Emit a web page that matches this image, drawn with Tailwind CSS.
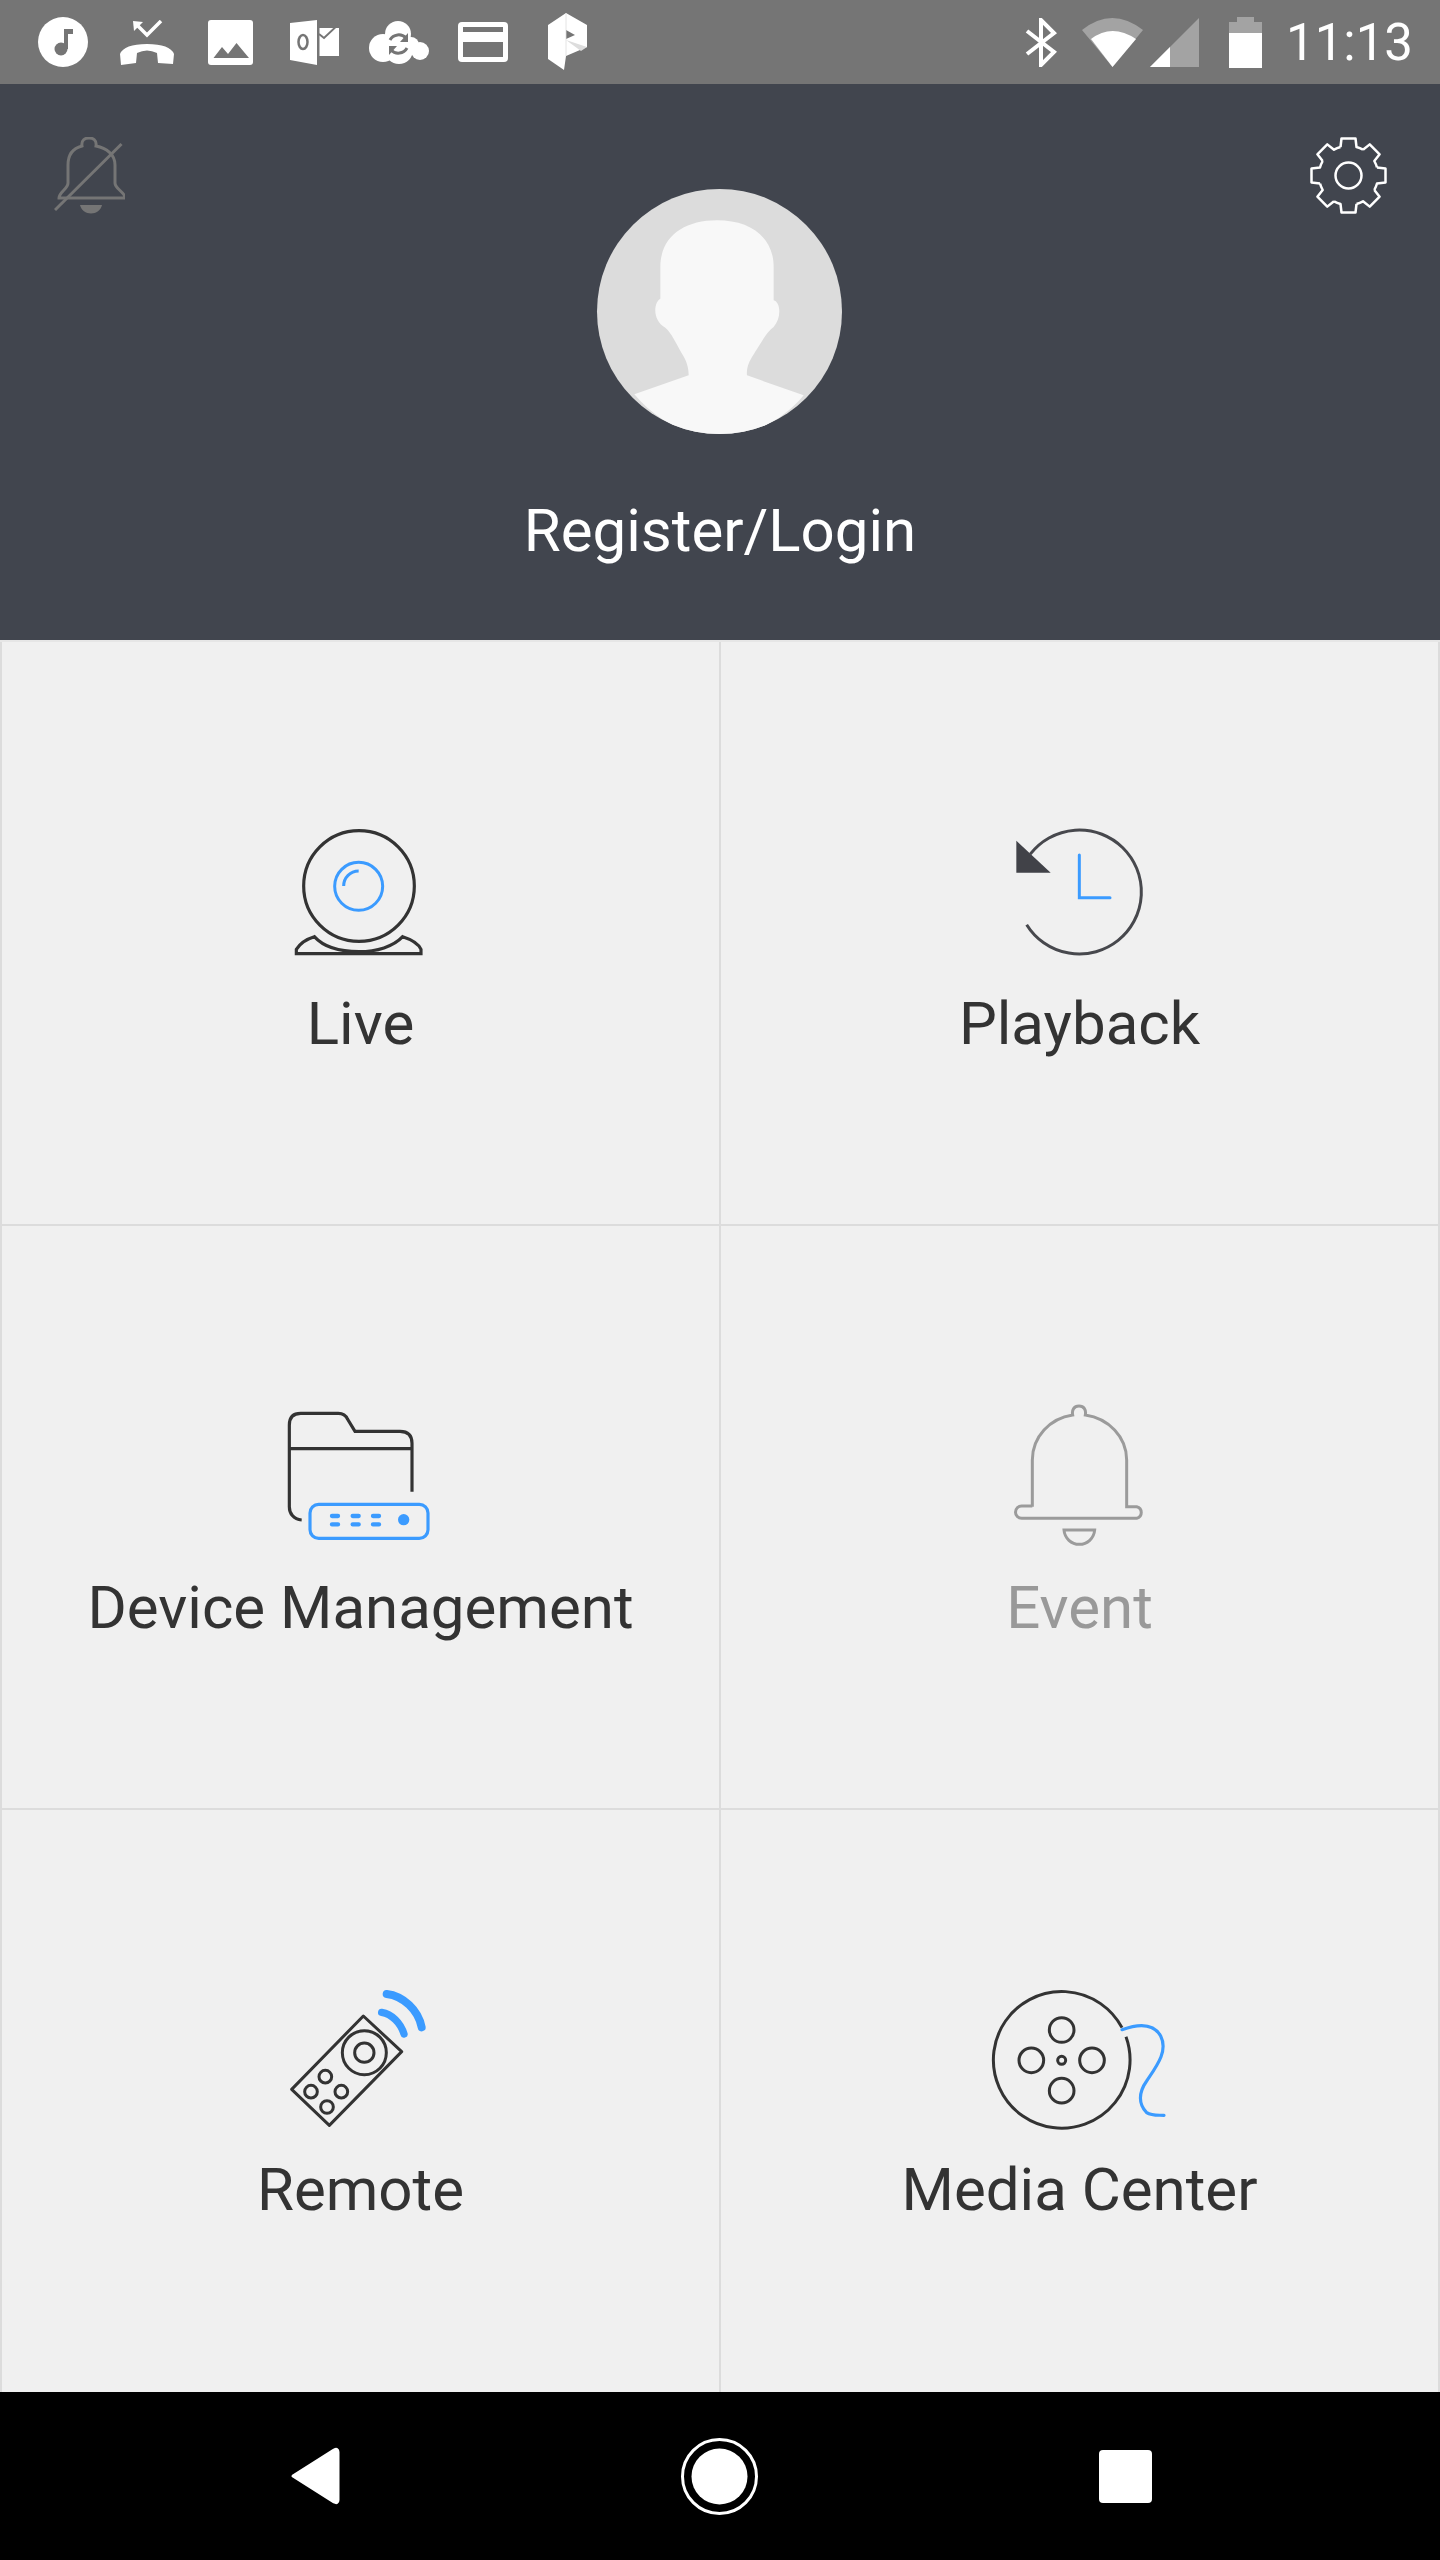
<!DOCTYPE html>
<html lang="en">
<head>
  <meta charset="UTF-8" />
  <meta name="viewport" content="width=device-width, initial-scale=1.0" />
  <title>Home</title>
  <script src="https://cdn.jsdelivr.net/npm/@tailwindcss/browser@4"></script>
</head>
<body class="bg-black font-[Roboto,sans-serif]">
<div class="w-[1440px] h-[2560px] flex flex-col overflow-hidden">

  <!-- Status bar -->
  <div class="h-[84px] shrink-0 bg-[#757575] flex items-center pl-[38px] pr-[28px]">
    <svg class="w-[50px] h-[50px]" viewBox="0 0 50 50"><circle cx="25" cy="25" r="25" fill="#fff"/><path d="M26 12H35V17H30V32H26Z" fill="#757575"/><circle cx="23" cy="32" r="6.500" fill="#757575"/></svg>
    <svg class="ml-[32px] w-[54px] h-[45px]" viewBox="0 0 54 45"><path d="M1 45L0 34Q4 24 27 24Q50 24 54 34L53 44L38 43L37 33Q27 28 17 33L16 43Z" fill="#fff"/><path d="M41 1L27 15L17 5" fill="none" stroke="#fff" stroke-width="3.500"/><path d="M13 1L23 2L14 11Z" fill="#fff"/></svg>
    <svg class="ml-[34px] w-[45px] h-[45px]" viewBox="0 0 45 45"><rect width="45" height="45" rx="3" fill="#fff"/><path d="M5.500 38L14 27L20 34L28.500 23L41 38Z" fill="#757575"/></svg>
    <svg class="ml-[37px] w-[50px] h-[45px]" viewBox="0 0 50 45"><path d="M0 3L27 0V45L0 40Z" fill="#fff"/><ellipse cx="13" cy="22" rx="4.500" ry="7" fill="none" stroke="#757575" stroke-width="2.500"/><rect x="29.500" y="8" width="19.500" height="28" fill="#fff"/><path d="M29 14L34 18L50 3" fill="none" stroke="#757575" stroke-width="2"/></svg>
    <svg class="ml-[29px] w-[60px] h-[43px]" viewBox="0 0 60 43"><g fill="#fff"><circle cx="29" cy="13" r="13"/><circle cx="14" cy="27" r="14"/><circle cx="51" cy="30" r="9"/><circle cx="30" cy="29" r="14"/><circle cx="42" cy="24" r="8"/></g><path d="M37 17A10 10 0 0 0 21 19M22 29A10 10 0 0 0 38 27" fill="none" stroke="#757575" stroke-width="3"/><path d="M39 12V21H31ZM20 34V25H28Z" fill="#757575"/></svg>
    <svg class="ml-[29px] w-[50px] h-[40px]" viewBox="0 0 50 40"><rect width="50" height="40" rx="4" fill="#fff"/><rect x="5" y="5" width="40" height="5" fill="#757575"/><rect x="5" y="20" width="40" height="15" fill="#757575"/></svg>
    <svg class="ml-[40px] w-[40px] h-[58px]" viewBox="0 0 40 58"><path d="M18 0L39 12V34L18 43L16 57L0 46V12Z" fill="#fff"/><path d="M18 17L27 22L18 26Z" fill="#757575"/><path d="M18 0L18 43" stroke="#ddd" stroke-width="0.800"/><path d="M18 27L39 34L33 38Z" fill="#ddd"/></svg>

    <svg class="ml-auto w-[32px] h-[49px]" viewBox="0 0 32 49"><path d="M2 13L29 34L16 47V2L29 15L2 36" fill="none" stroke="#fff" stroke-width="4"/></svg>
    <svg class="ml-[25px] w-[61px] h-[49px]" viewBox="0 0 61 49"><path d="M0 12Q30 -12 61 12L30.500 49Z" fill="#a3a3a3"/><path d="M9 21Q30 5 54 21L30.500 49Z" fill="#fff"/></svg>
    <svg class="ml-[7px] w-[49px] h-[49px]" viewBox="0 0 49 49"><path d="M0 49L49 0V49Z" fill="#a3a3a3"/><path d="M0 49L20 29V49Z" fill="#fff"/></svg>
    <svg class="ml-[30px] w-[33px] h-[51px]" viewBox="0 0 33 51"><path d="M8 0H25V5H33V16H0V5H8Z" fill="#a3a3a3"/><rect y="16" width="33" height="35" fill="#fff"/></svg>
    <span class="ml-[24px] w-[126px] whitespace-nowrap text-[51px] leading-none text-white">11:13</span>
  </div>

  <!-- Profile header -->
  <div class="relative h-[556px] shrink-0 bg-[#41454e] flex flex-col items-center pt-[105px]">
    <svg class="absolute left-[54px] top-[53px] w-[71px] h-[77px]" viewBox="0 0 71 77">
      <path d="M5 61C5 55 14 52 14 46V28C14 17 20 11 28 9C27 3 31 1 35 1C39 1 43 3 42 9C52 11 61 17 61 28V46C61 52 71 55 71 61Z" fill="none" stroke="#757575" stroke-width="3"/>
      <path d="M1 73L67.500 7" stroke="#757575" stroke-width="3"/>
      <path d="M26 68H48C47 73 42 76.500 37 76.500C32 76.500 27 73 26 68Z" fill="#757575"/>
    </svg>
    <svg class="absolute left-[1310px] top-[53px] w-[77px] h-[77px]" viewBox="-38.500 -38.500 77 77">
      <g fill="none" stroke="#fff" stroke-width="2.500" stroke-linejoin="round">
        <path d="M-8 -28.500L-7 -37H7L8 -28.500A29.600 29.600 0 0 1 14.500 -25.800"/>
        <path transform="rotate(45)" d="M-8 -28.500L-7 -37H7L8 -28.500A29.600 29.600 0 0 1 14.500 -25.800"/>
        <path transform="rotate(90)" d="M-8 -28.500L-7 -37H7L8 -28.500A29.600 29.600 0 0 1 14.500 -25.800"/>
        <path transform="rotate(135)" d="M-8 -28.500L-7 -37H7L8 -28.500A29.600 29.600 0 0 1 14.500 -25.800"/>
        <path transform="rotate(180)" d="M-8 -28.500L-7 -37H7L8 -28.500A29.600 29.600 0 0 1 14.500 -25.800"/>
        <path transform="rotate(225)" d="M-8 -28.500L-7 -37H7L8 -28.500A29.600 29.600 0 0 1 14.500 -25.800"/>
        <path transform="rotate(270)" d="M-8 -28.500L-7 -37H7L8 -28.500A29.600 29.600 0 0 1 14.500 -25.800"/>
        <path transform="rotate(315)" d="M-8 -28.500L-7 -37H7L8 -28.500A29.600 29.600 0 0 1 14.500 -25.800"/>
        <circle r="13"/>
      </g>
    </svg>
    <div class="w-[245px] h-[245px] mr-[2px] rounded-full overflow-hidden bg-[#dcdcdc]">
      <svg class="w-[245px] h-[245px]" viewBox="110 56 735 735"><path d="M300 385V290C300 200 370 150 470 150C570 150 640 200 640 290V390C660 395 665 440 640 470C620 485 610 505 575 560C562 580 558 600 560 615L730 675C660 760 560 800 477 800C390 800 290 755 222 672L385 615C385 590 378 570 365 550C345 515 335 490 315 472C275 450 280 395 300 385Z" fill="#f8f8f8"/></svg>
    </div>
    <div class="mt-[55px] text-[60px] leading-[84px] text-white">Register/Login</div>
  </div>

  <!-- Menu grid -->
  <div class="h-[1752px] shrink-0 grid grid-cols-[721px_719px] grid-rows-[584px_584px_582px] bg-[#f0f0f0] text-[#333] border-t-2 border-[#e6e6e6]">

    <div class="flex flex-col items-center pt-[160px] border-l-2 border-r-2 border-b-2 border-[#dcdcdc]">
      <svg class="w-[220px] h-[180px]" viewBox="-27 6 660 540" fill="none">
        <circle cx="297" cy="258" r="166" stroke="#333" stroke-width="9.500"/>
        <circle cx="296" cy="259" r="72" stroke="#3b9bff" stroke-width="9"/>
        <path d="M251 258C251 233 271 213 296 213" stroke="#3b9bff" stroke-width="9"/>
        <path d="M109 461V448C120 430 140 417 163 410C190 440 240 455 297 455C350 455 400 440 428 410C450 417 475 430 483 448V461Z" stroke="#333" stroke-width="9.500"/>
      </svg>
      <div class="text-[60px] leading-[84px]">Live</div>
    </div>

    <div class="flex flex-col items-center pt-[160px] border-r-2 border-b-2 border-[#dcdcdc]">
      <svg class="w-[220px] h-[180px]" viewBox="-60 6 660 540" fill="none">
        <path d="M110 374A186 186 0 1 0 120.600 162.600" stroke="#47484d" stroke-width="9"/>
        <path d="M79 122V218H182Z" fill="#414248"/>
        <path d="M268 165V293H360" stroke="#3b9bff" stroke-width="9" stroke-linecap="round"/>
      </svg>
      <div class="text-[60px] leading-[84px]">Playback</div>
    </div>

    <div class="flex flex-col items-center pt-[160px] border-l-2 border-r-2 border-b-2 border-[#dcdcdc]">
      <svg class="w-[220px] h-[180px]" viewBox="-27 -12 660 540" fill="none">
        <path d="M125 390C100 388 88 370 88 350V105Q88 70 122 70H235Q255 70 263 88L285 124H420Q456 124 456 160V305M88 176H456" stroke="#333" stroke-width="9.500"/>
        <rect x="150" y="343" width="354" height="102" rx="26" stroke="#3b9bff" stroke-width="9.500"/>
        <path d="M216 378H234M278 378H296M339 378H357M216 403H234M278 403H296M339 403H357" stroke="#3b9bff" stroke-width="13" stroke-linecap="round"/>
        <circle cx="431" cy="389" r="17" fill="#3b9bff"/>
      </svg>
      <div class="text-[60px] leading-[84px]">Device Management</div>
    </div>

    <div class="flex flex-col items-center pt-[160px] border-r-2 border-b-2 border-[#dcdcdc]">
      <svg class="w-[220px] h-[180px]" viewBox="-60 -12 660 540" fill="none" stroke="#9b9b9b" stroke-width="9">
        <path d="M127 350V210C127 140 180 85 248 75C245 60 252 48 267 48C282 48 289 60 286 75C355 85 410 140 410 210V350H440A18 18 0 0 1 440 385H95A18 18 0 0 1 95 348H127Z"/>
        <path d="M222 420H314C312 445 292 463 268 463C244 463 224 445 222 420Z"/>
      </svg>
      <div class="text-[60px] leading-[84px] text-[#999]">Event</div>
    </div>

    <div class="flex flex-col items-center pt-[160px] border-l-2 border-r-2 border-[#dcdcdc]">
      <svg class="w-[220px] h-[180px]" viewBox="-57 0 660 540" fill="none" stroke="#333" stroke-width="9">
        <path d="M280 138L395 245L178 466L65 358Z" stroke-linejoin="round"/>
        <circle cx="283" cy="248" r="66"/>
        <circle cx="283" cy="248" r="29"/>
        <circle cx="166" cy="320" r="19"/>
        <circle cx="123" cy="365" r="19"/>
        <circle cx="214" cy="365" r="19"/>
        <circle cx="171" cy="411" r="19"/>
        <path d="M350 72C400 78 445 120 455 172" stroke="#3b9bff" stroke-width="24" stroke-linecap="round"/>
        <path d="M335 127C365 132 392 158 402 192" stroke="#3b9bff" stroke-width="22" stroke-linecap="round"/>
      </svg>
      <div class="-mt-[2px] text-[60px] leading-[84px]">Remote</div>
    </div>

    <div class="flex flex-col items-center pt-[160px] border-r-2 border-[#dcdcdc]">
      <svg class="w-[220px] h-[180px]" viewBox="0 -3 660 540" fill="none" stroke="#333" stroke-width="9">
        <path d="M456 170A205 205 0 1 0 468 197"/>
        <circle cx="275" cy="177" r="37"/>
        <circle cx="184" cy="268" r="37"/>
        <circle cx="366" cy="268" r="37"/>
        <circle cx="275" cy="359" r="37"/>
        <circle cx="275" cy="268" r="12"/>
        <path d="M456 176C500 160 550 155 572 195C595 240 560 285 530 330C505 365 505 400 530 425C545 435 565 432 582 433" stroke="#3b9bff" stroke-width="9.500" stroke-linecap="round"/>
      </svg>
      <div class="-mt-[2px] text-[60px] leading-[84px]">Media Center</div>
    </div>
  </div>

  <!-- Navigation bar -->
  <div class="flex-1 bg-black flex items-center pl-[290px]">
    <svg class="w-[50px] h-[58px]" viewBox="0 0 50 58"><path d="M3 29L44 3Q48 1 48 5V53Q48 57 44 55Z" fill="#fff" stroke="#fff" stroke-width="3" stroke-linejoin="round"/></svg>
    <svg class="ml-[341px] w-[77px] h-[77px]" viewBox="0 0 77 77"><circle cx="38.500" cy="38.500" r="37" fill="none" stroke="#fff" stroke-width="3"/><circle cx="38.500" cy="38.500" r="28" fill="#fff"/></svg>
    <div class="ml-[341px] w-[53px] h-[53px] bg-white rounded-[4px]"></div>
  </div>
</div>
</body>
</html>
